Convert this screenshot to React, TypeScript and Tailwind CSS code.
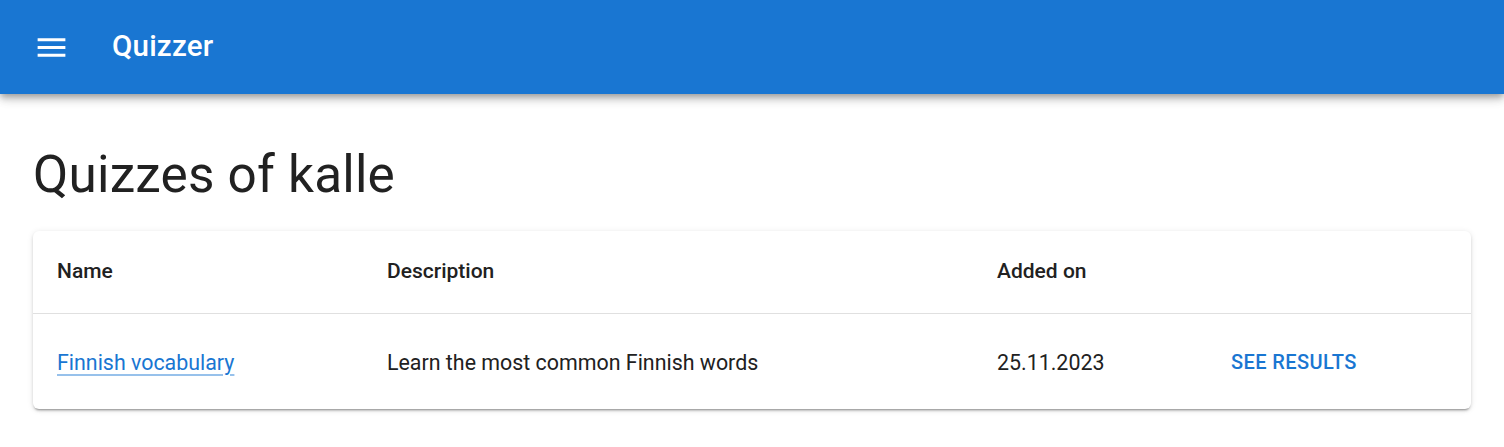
export default function App() {
  const quizzes = [
    {
      name: "Finnish vocabulary",
      description: "Learn the most common Finnish words",
      addedOn: "25.11.2023",
    },
  ];

  return (
    <div className="min-h-[447px] bg-white font-['Roboto',sans-serif] text-[#212121]">
      {/* App bar */}
      <header className="flex h-[94px] items-center bg-[#1976d2] px-[36px] text-white shadow-[0_3px_6px_-1px_rgba(0,0,0,0.25),0_6px_8px_0_rgba(0,0,0,0.14),0_1px_15px_0_rgba(0,0,0,0.12)]">
        <button className="flex h-[36px] w-[30px] items-center justify-center" aria-label="menu">
          <svg width="37" height="37" viewBox="0 0 24 24" fill="currentColor" className="shrink-0">
            <path d="M3 18h18v-2H3v2zm0-5h18v-2H3v2zm0-7v2h18V6H3z" />
          </svg>
        </button>
        <h1 className="ml-[46px] text-[29.5px] font-medium leading-none tracking-[0.2px]">Quizzer</h1>
      </header>

      <main className="px-[33px]">
        <h2 className="pt-[49px] pb-[25px] text-[51.3px] leading-[1.235] font-normal tracking-[0.2px]">
          Quizzes of kalle
        </h2>

        <div className="overflow-hidden rounded-[6px] bg-white shadow-[0_3px_2px_-2px_rgba(0,0,0,0.3),0_2px_3px_0_rgba(0,0,0,0.12),0_1px_6px_0_rgba(0,0,0,0.1)]">
          <table className="w-full table-fixed border-collapse text-left text-[21.4px]">
            <colgroup>
              <col className="w-[330px]" />
              <col className="w-[610px]" />
              <col className="w-[222px]" />
              <col />
            </colgroup>
            <thead>
              <tr className="h-[82px] border-b border-[#e0e0e0]">
                <th className="px-[24px] text-[21px] font-medium">Name</th>
                <th className="px-[24px] text-[21px] font-medium">Description</th>
                <th className="px-[24px] text-[21px] font-medium">Added on</th>
                <th className="px-[24px]" />
              </tr>
            </thead>
            <tbody>
              {quizzes.map((q) => (
                <tr key={q.name} className="h-[96px]">
                  <td className="px-[24px] pt-[2px]">
                    <a
                      href="#"
                      className="text-[#1976d2] underline decoration-[rgba(25,118,210,0.45)] underline-offset-[4px]"
                    >
                      {q.name}
                    </a>
                  </td>
                  <td className="px-[24px] pt-[2px]">{q.description}</td>
                  <td className="px-[24px] pt-[2px]">{q.addedOn}</td>
                  <td className="px-[24px]">
                    <button className="rounded px-[12px] py-[9px] text-[20px] font-medium uppercase tracking-[0.4px] text-[#1976d2]">
                      See results
                    </button>
                  </td>
                </tr>
              ))}
            </tbody>
          </table>
        </div>
      </main>
    </div>
  );
}
